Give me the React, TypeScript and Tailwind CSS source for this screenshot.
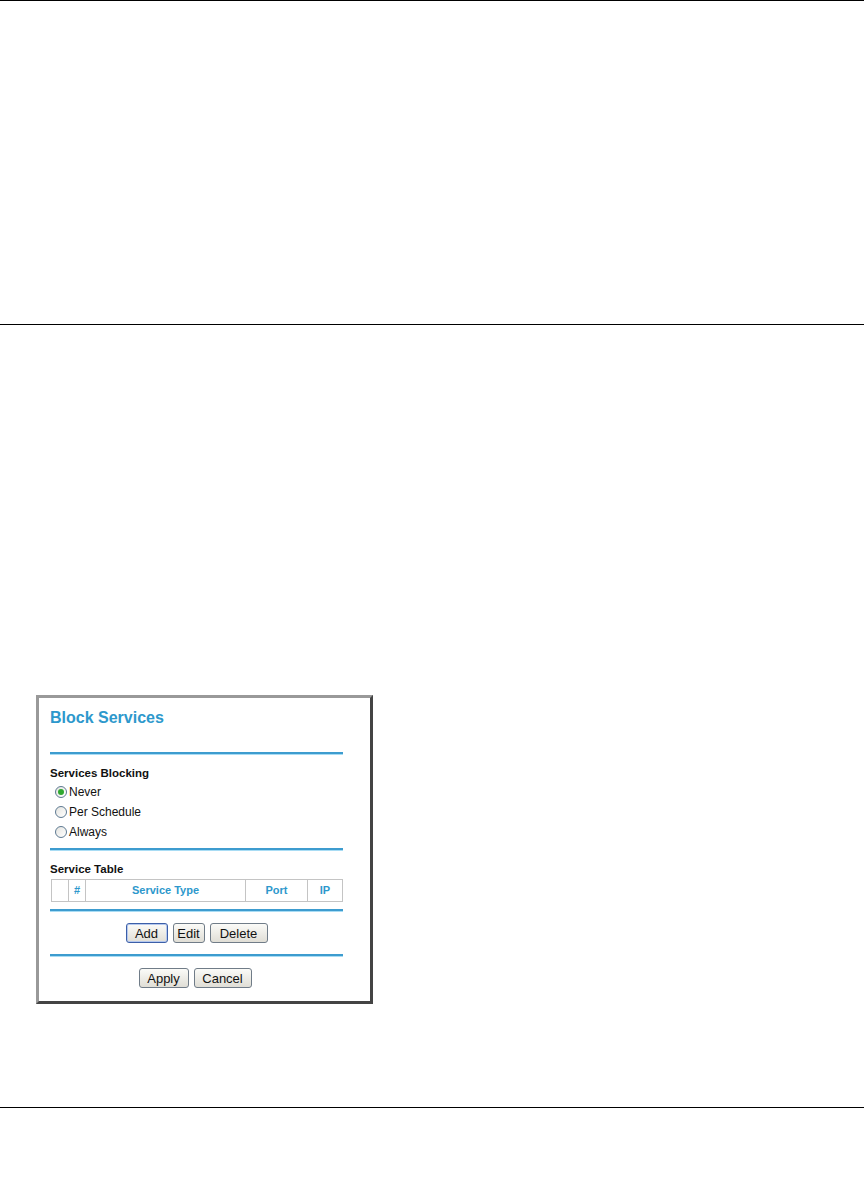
import React from 'react';

const blue = 'text-[#2d98cc]';

const Rule: React.FC = () => <div className="h-[2px] bg-[#3d9ccf] shadow-[0_1px_0_#a8dcf4]" />;

const Radio: React.FC<{ label: string; checked?: boolean }> = ({ label, checked }) => (
  <div className="flex items-center h-[20px] pl-[5px]">
    <span className="flex items-center justify-center w-[12px] h-[12px] rounded-full border border-[#5e7a92] bg-gradient-to-br from-[#e4e4e0] to-white">
      {checked && <span className="w-[6px] h-[6px] rounded-full bg-[#2fa82f]" />}
    </span>
    <span className="ml-[2px] text-[12px] leading-[14px] text-[#111]">{label}</span>
  </div>
);

const Btn: React.FC<{ label: string; active?: boolean; w: string }> = ({ label, active, w }) => (
  <button
    className={`${w} h-[20px] rounded-[3px] border text-[13px] leading-[15px] text-[#111] bg-gradient-to-b from-[#fbfbf8] to-[#e0ded6] ${
      active ? 'border-[#3c5fa8] shadow-[inset_0_0_0_1px_#b5c8ee]' : 'border-[#707c88]'
    }`}
  >
    {label}
  </button>
);

const BlockServices: React.FC = () => (
  <div className="w-[337px] h-[309px] border-t-[3px] border-l-[3px] border-t-[#999] border-l-[#999] border-r-[3px] border-b-[3px] border-r-[#444] border-b-[#444] bg-white">
    <div className="pl-[11px] pr-[27px]">
      <div className={`pt-[10px] text-[16px] leading-[20px] font-bold ${blue}`}>Block Services</div>
      <div className="mt-[24px]">
        <Rule />
      </div>
      <div className="mt-[12px] text-[11.5px] leading-[14px] font-bold text-[#111]">Services Blocking</div>
      <div className="mt-[2px]">
        <Radio label="Never" checked />
        <Radio label="Per Schedule" />
        <Radio label="Always" />
      </div>
      <div className="mt-[6px]">
        <Rule />
      </div>
      <div className="mt-[12px] text-[11.5px] leading-[14px] font-bold text-[#111]">Service Table</div>
      <table className="mt-[3px] ml-[1px] w-[292px] border-collapse text-[11px] font-bold">
        <thead>
          <tr className="h-[22px]">
            <th className="w-[17px] border border-[#c4c4c4]" />
            <th className={`w-[17px] border border-[#c4c4c4] ${blue}`}>#</th>
            <th className={`w-[160px] border border-[#c4c4c4] ${blue}`}>Service Type</th>
            <th className={`w-[62px] border border-[#c4c4c4] ${blue}`}>Port</th>
            <th className={`border border-[#c4c4c4] ${blue}`}>IP</th>
          </tr>
        </thead>
      </table>
      <div className="mt-[7px]">
        <Rule />
      </div>
      <div className="mt-[12px] flex justify-center gap-[5px]">
        <Btn label="Add" active w="w-[42px]" />
        <Btn label="Edit" w="w-[32px]" />
        <Btn label="Delete" w="w-[58px]" />
      </div>
      <div className="mt-[11px]">
        <Rule />
      </div>
      <div className="mt-[12px] flex justify-center gap-[5px] pr-[3px]">
        <Btn label="Apply" w="w-[50px]" />
        <Btn label="Cancel" w="w-[58px]" />
      </div>
    </div>
  </div>
);

export default function App() {
  return (
    <div className="w-[864px] min-h-[1184px] bg-white" style={{ fontFamily: '"Liberation Sans", Arial, sans-serif' }}>
      <div className="h-px bg-black" />
      <div className="h-[323px]" />
      <div className="h-px bg-black" />
      <div className="h-[370px]" />
      <div className="pl-[36px]">
        <BlockServices />
      </div>
      <div className="h-[103px]" />
      <div className="h-px bg-black" />
    </div>
  );
}
